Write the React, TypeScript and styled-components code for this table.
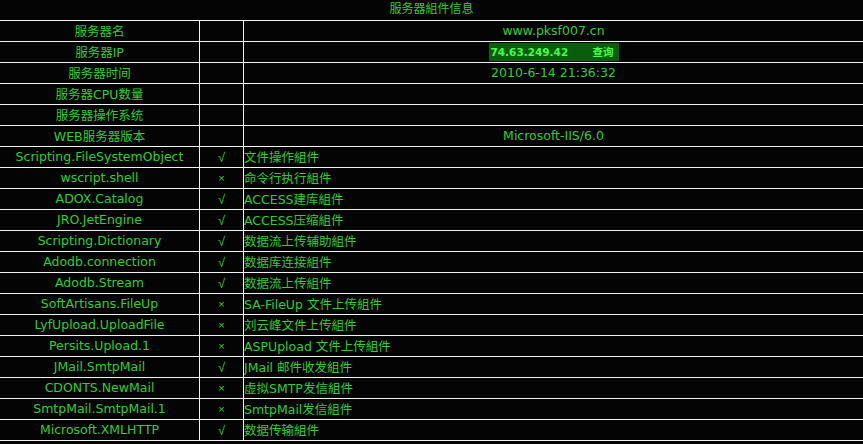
import React from "react";
import styled, { createGlobalStyle } from "styled-components";

const Global = createGlobalStyle`
  html, body { margin: 0; padding: 0; background: #040404; }
  body { font-family: "DejaVu Sans", "Noto Sans CJK SC", sans-serif; }
`;

const Page = styled.div`
  width: 863px;
  background: #040404;
  color: #2fcf2f;
  font-size: 12.5px;
`;

const Title = styled.div`
  height: 20px;
  line-height: 18px;
  text-align: center;
  font-size: 12px;
`;

const Row = styled.div`
  display: grid;
  grid-template-columns: 199px 1px 43px 1px 1fr;
  height: 20px;
  border-top: 1px solid #f2f2f2;
  &:last-child { border-bottom: 1px solid #f2f2f2; }
`;

const Line = styled.div`
  background: #f2f2f2;
`;

const Cell = styled.div<{ $align?: "left" | "center" }>`
  display: flex;
  align-items: center;
  justify-content: ${(p) => (p.$align === "left" ? "flex-start" : "center")};
  white-space: nowrap;
  overflow: hidden;
  padding-bottom: 1px;
`;

const Mark = styled.span<{ $ok: boolean }>`
  font-size: ${(p) => (p.$ok ? "13px" : "11px")};
  font-family: "Liberation Sans", sans-serif;
  padding-top: ${(p) => (p.$ok ? "2px" : "1px")};
`;

const IpBox = styled.div`
  width: 130px;
  height: 18px;
  background: #0b5c0b;
  display: flex;
  align-items: center;
  justify-content: space-between;
  padding: 0 5px 0 2px;
  box-sizing: border-box;
  color: #44ff44;
  font-weight: bold;
  font-size: 10.5px;
  font-family: "DejaVu Sans", "Noto Sans CJK SC", sans-serif;
`;

type Info = { label: string; value?: React.ReactNode };

const info: Info[] = [
  { label: "服务器名", value: "www.pksf007.cn" },
  {
    label: "服务器IP",
    value: (
      <IpBox>
        <span>74.63.249.42</span>
        <span>查询</span>
      </IpBox>
    ),
  },
  { label: "服务器时间", value: "2010-6-14 21:36:32" },
  { label: "服务器CPU数量" },
  { label: "服务器操作系统" },
  { label: "WEB服务器版本", value: "Microsoft-IIS/6.0" },
];

const comps: [string, boolean, string][] = [
  ["Scripting.FileSystemObject", true, "文件操作組件"],
  ["wscript.shell", false, "命令行执行組件"],
  ["ADOX.Catalog", true, "ACCESS建库組件"],
  ["JRO.JetEngine", true, "ACCESS压缩組件"],
  ["Scripting.Dictionary", true, "数据流上传辅助組件"],
  ["Adodb.connection", true, "数据库连接組件"],
  ["Adodb.Stream", true, "数据流上传組件"],
  ["SoftArtisans.FileUp", false, "SA-FileUp 文件上传組件"],
  ["LyfUpload.UploadFile", false, "刘云峰文件上传組件"],
  ["Persits.Upload.1", false, "ASPUpload 文件上传組件"],
  ["JMail.SmtpMail", true, "JMail 邮件收发組件"],
  ["CDONTS.NewMail", false, "虚拟SMTP发信組件"],
  ["SmtpMail.SmtpMail.1", false, "SmtpMail发信組件"],
  ["Microsoft.XMLHTTP", true, "数据传输組件"],
];

export default function App() {
  return (
    <Page>
      <Global />
      <Title>服务器組件信息</Title>
      <div>
        {info.map((r) => (
          <Row key={r.label}>
            <Cell>{r.label}</Cell>
            <Line />
            <Cell />
            <Line />
            <Cell>{r.value}</Cell>
          </Row>
        ))}
        {comps.map(([name, ok, desc]) => (
          <Row key={name}>
            <Cell>{name}</Cell>
            <Line />
            <Cell>
              <Mark $ok={ok}>{ok ? "√" : "×"}</Mark>
            </Cell>
            <Line />
            <Cell $align="left">{desc}</Cell>
          </Row>
        ))}
      </div>
    </Page>
  );
}
